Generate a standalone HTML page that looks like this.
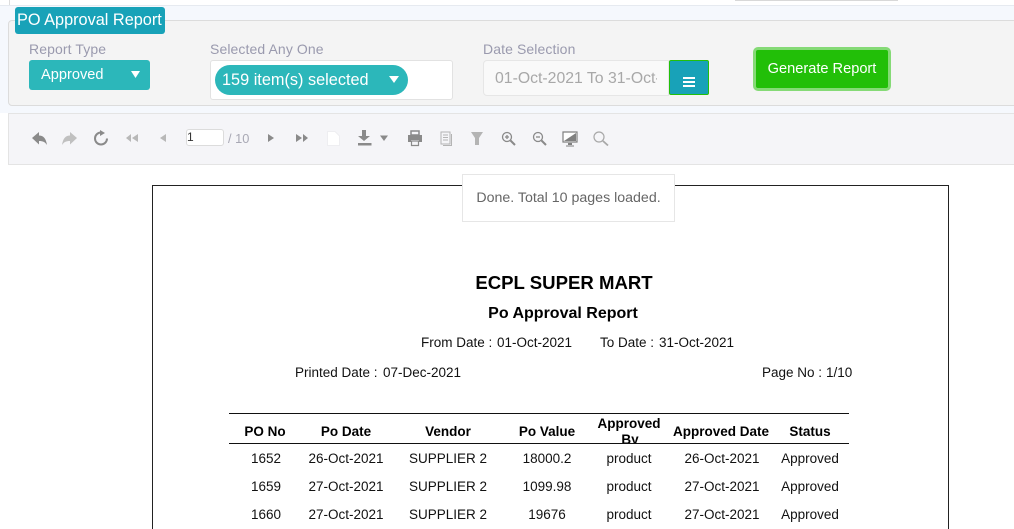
<!DOCTYPE html>
<html><head><meta charset="utf-8">
<style>
html,body{margin:0;padding:0;width:1014px;height:529px;overflow:hidden;background:#fff}
body{position:relative;font-family:"Liberation Sans",sans-serif}
.a{position:absolute;white-space:nowrap;box-sizing:border-box}
.c{transform:translateX(-50%)}
.lab{font-size:14px;color:#9a9aae;top:41px;line-height:16px;letter-spacing:.1px}
.r{font-size:13.5px;color:#111;line-height:16px}
.h{font-size:13.5px;color:#000;font-weight:bold;line-height:16px}
svg{position:absolute;overflow:visible}
</style></head><body>
<div class="a" style="left:0;top:5px;width:1014px;height:108px;background:#f5f8fd;border-top:1px solid #e6eaf0"></div>
<div class="a" style="left:9px;top:0;width:1px;height:5px;background:#ddd"></div>
<div class="a" style="left:735px;top:0;width:163px;height:1px;background:#d8d8d8"></div>
<div class="a" style="left:8px;top:20px;width:1010px;height:86px;background:#f4f4f4;border:1px solid #dcdcdc;border-radius:4px"></div>
<div class="a" style="left:15px;top:7px;width:150px;height:27px;background:#18a2b8;border-radius:3px;color:#fff;font-size:16.300px;line-height:27px;padding-left:2px">PO Approval Report</div>

<div class="a lab" style="left:29px">Report Type</div>
<div class="a" style="left:29px;top:60px;width:121px;height:30px;background:#2cb7ba;border-radius:3px;color:#fff;font-size:14.600px;line-height:31px;padding-left:12px">Approved</div>
<svg style="left:131px;top:71px" width="9" height="7"><path d="M0 0H9L4.500 7Z" fill="#fff"/></svg>

<div class="a lab" style="left:210px">Selected Any One</div>
<div class="a" style="left:210px;top:60px;width:243px;height:40px;background:#fff;border:1px solid #e2e2e2;border-radius:3px"></div>
<div class="a" style="left:215px;top:65px;width:193px;height:30px;background:#2cb7ba;border-radius:15px;color:#fff;font-size:16.300px;line-height:30px;padding-left:7px">159 item(s) selected</div>
<svg style="left:389px;top:76px" width="10" height="7"><path d="M0 0H10L5 7Z" fill="#fff"/></svg>

<div class="a lab" style="left:483px">Date Selection</div>
<div class="a" style="left:483px;top:60px;width:186px;height:36px;background:#f9f9f9;border:1px solid #e6e6e6;border-radius:4px 0 0 4px;color:#a8a8a8;font-size:15.800px;line-height:35px;padding-left:11px;overflow:hidden"><span style="display:block;width:162px;overflow:hidden">01-Oct-2021 To 31-Oct-2021</span></div>
<div class="a" style="left:669px;top:60px;width:40px;height:35px;background:#18a2b8;border:1px solid #22c00a;border-radius:2px"></div>
<div class="a" style="left:683px;top:77px;width:12px;height:2px;background:#fff"></div>
<div class="a" style="left:683px;top:81px;width:12px;height:2px;background:#fff"></div>
<div class="a" style="left:683px;top:85px;width:12px;height:2px;background:#fff"></div>

<div class="a" style="left:753px;top:47px;width:138px;height:44px;background:#22bf08;border:3px solid #85da76;border-radius:5px;color:#fff;font-size:14.600px;line-height:39px;text-align:center">Generate Report</div>

<div class="a" style="left:8px;top:113px;width:1010px;height:52px;background:#f5f5f8;border:1px solid #e4e4e4;border-right:0"></div>

<!-- toolbar icons -->
<svg style="left:0;top:0" width="1014" height="165">
<g fill="#8a8a8a">
<path d="M32 138L39 132V135.500C43 135.500 46 138 47 145C45 142 43 141 39 141V144.500Z"/>
<path fill="#c0c0c0" d="M77 138L70 132V135.500C66 135.500 63 138 62 145C64 142 66 141 70 141V144.500Z"/>
<path d="M101 132.500A6 6 0 1 0 107 138.500" fill="none" stroke="#8a8a8a" stroke-width="2"/>
<path d="M100 130V136L105 133Z"/>
<path fill="#b8b8b8" d="M126 138L131 134V142ZM132 138L138 134V142Z"/>
<path fill="#b8b8b8" d="M160 138L166 134V142Z"/>
<path d="M274 138L268 134V142Z"/>
<path d="M302 138L296 134V142ZM308 138L303 134V142Z"/>
<path d="M362 130H366V136H370L364 141L358 136H362ZM358 143H371.500V145.500H358Z"/>
<path d="M380 135.500H388L384 141Z"/>
</g>
<path d="M327.500 131.500H335L339.500 136V145.500H327.500Z" fill="#fff" stroke="#eeeef1" stroke-width="1"/>
<g fill="#8a8a8a">
<path d="M411 131H419V135H411Z" fill="none" stroke="#8a8a8a" stroke-width="1.500"/>
<path d="M408 135H422V142H419V140H411V142H408Z"/>
<path d="M411.500 141H418.500V145.500H411.500Z" fill="none" stroke="#8a8a8a" stroke-width="1.200"/>
</g>
<g fill="none" stroke="#b4b4b4" stroke-width="1">
<path d="M441 132H450V144H441Z"/><path d="M443 135H448M443 137.500H448M443 140H448"/><path d="M451.500 134V145.500H443"/>
</g>
<path d="M471 132H483L479 138V145H475V138Z" fill="#b4b4b4"/>
<g fill="none" stroke="#8a8a8a">
<circle cx="507" cy="137" r="4.500" stroke-width="1.300"/><path d="M505 137H509M507 135V139" stroke-width="1.300"/><path d="M510.500 140.500L515 145" stroke-width="2"/>
<circle cx="538" cy="137" r="4.500" stroke-width="1.300"/><path d="M536 137H540" stroke-width="1.300"/><path d="M541.500 140.500L546 145" stroke-width="2"/>
<circle cx="599" cy="137" r="5" stroke="#a8a8a8" stroke-width="1.200"/><path d="M603 141L608 145.500" stroke="#a8a8a8" stroke-width="1.800"/>
</g>
<path d="M563 132H577V142H563Z" fill="#fff" stroke="#808080" stroke-width="1.200"/>
<path d="M564 141L576 133V141Z" fill="#808080"/>
<path d="M568 145H572V143H568ZM566 145.500H574V146.500H566Z" fill="#808080"/>
</svg>
<div class="a" style="left:186px;top:129px;width:38px;height:17px;background:#fff;border:1px solid #dcdcdc;border-radius:3px;font-size:12px;line-height:15px;color:#333;padding-left:0">1</div>
<div class="a" style="left:228px;top:131px;font-size:12.800px;line-height:16px;color:#a8a8b4">/ 10</div>

<!-- report -->
<div class="a" style="left:152px;top:185px;width:797px;height:360px;border:1px solid #222;background:#fff"></div>
<div class="a" style="left:462px;top:174px;width:213px;height:48px;background:#fff;border:1px solid #e6e6e6;color:#666;font-size:14.200px;line-height:46px;text-align:center">Done. Total 10 pages loaded.</div>

<div class="a c" style="left:564px;top:272px;font-size:18.600px;font-weight:bold;line-height:21px;color:#000">ECPL SUPER MART</div>
<div class="a c" style="left:563px;top:304px;font-size:16px;font-weight:bold;line-height:19px;color:#000">Po Approval Report</div>
<div class="a r" style="left:421px;top:335px">From Date :</div>
<div class="a r" style="left:497px;top:335px">01-Oct-2021</div>
<div class="a r" style="left:600px;top:335px">To Date :</div>
<div class="a r" style="left:659px;top:335px">31-Oct-2021</div>
<div class="a r" style="left:295px;top:365px">Printed Date :</div>
<div class="a r" style="left:383px;top:365px">07-Dec-2021</div>
<div class="a r" style="left:762px;top:365px">Page No :</div>
<div class="a r" style="left:826px;top:365px">1/10</div>

<div class="a" style="left:229px;top:413px;width:620px;height:1px;background:#111"></div>
<div class="a" style="left:229px;top:443px;width:620px;height:1px;background:#111"></div>
<div class="a c h" style="left:265px;top:424px">PO No</div>
<div class="a c h" style="left:346px;top:424px">Po Date</div>
<div class="a c h" style="left:448px;top:424px">Vendor</div>
<div class="a c h" style="left:547px;top:424px">Po Value</div>
<div class="a c h" style="left:629px;top:416px">Approved</div>
<div class="a" style="left:600px;top:432px;width:60px;height:11px;overflow:hidden;text-align:center;font-size:13.500px;font-weight:bold;line-height:16px;color:#000">By</div>
<div class="a c h" style="left:721px;top:424px">Approved Date</div>
<div class="a c h" style="left:810px;top:424px">Status</div>

<div class="a c r" style="left:266px;top:451px">1652</div>
<div class="a c r" style="left:346px;top:451px">26-Oct-2021</div>
<div class="a c r" style="left:448px;top:451px">SUPPLIER 2</div>
<div class="a c r" style="left:547px;top:451px">18000.2</div>
<div class="a c r" style="left:629px;top:451px">product</div>
<div class="a c r" style="left:722px;top:451px">26-Oct-2021</div>
<div class="a c r" style="left:810px;top:451px">Approved</div>

<div class="a c r" style="left:266px;top:479px">1659</div>
<div class="a c r" style="left:346px;top:479px">27-Oct-2021</div>
<div class="a c r" style="left:448px;top:479px">SUPPLIER 2</div>
<div class="a c r" style="left:547px;top:479px">1099.98</div>
<div class="a c r" style="left:629px;top:479px">product</div>
<div class="a c r" style="left:722px;top:479px">27-Oct-2021</div>
<div class="a c r" style="left:810px;top:479px">Approved</div>

<div class="a c r" style="left:266px;top:507px">1660</div>
<div class="a c r" style="left:346px;top:507px">27-Oct-2021</div>
<div class="a c r" style="left:448px;top:507px">SUPPLIER 2</div>
<div class="a c r" style="left:547px;top:507px">19676</div>
<div class="a c r" style="left:629px;top:507px">product</div>
<div class="a c r" style="left:722px;top:507px">27-Oct-2021</div>
<div class="a c r" style="left:810px;top:507px">Approved</div>
</body></html>
